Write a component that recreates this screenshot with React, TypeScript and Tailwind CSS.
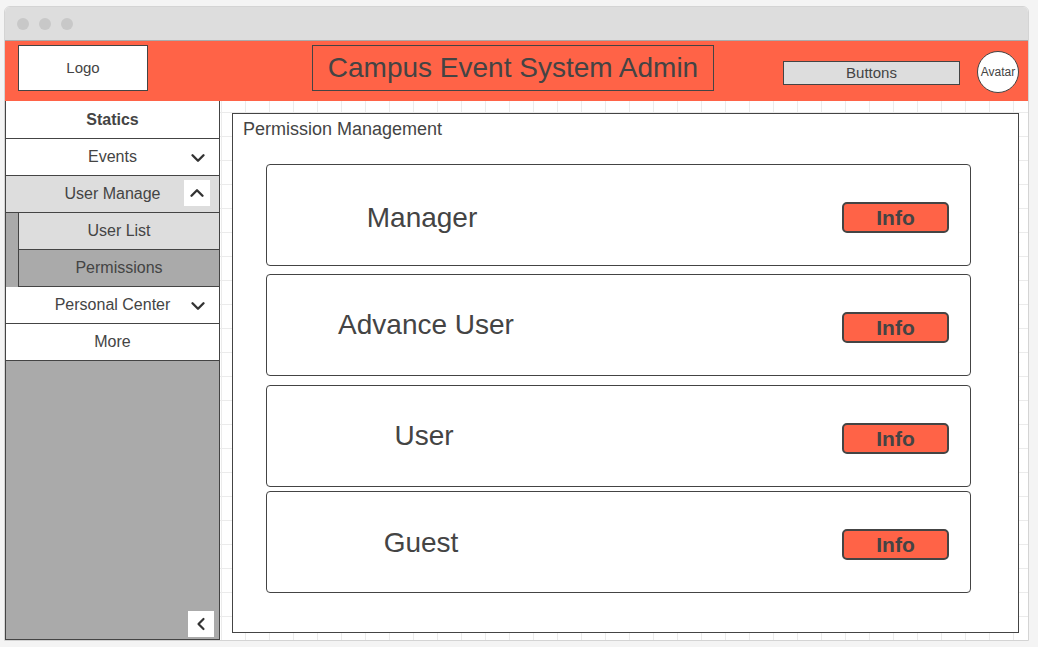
import { ChevronDown, ChevronLeft, ChevronUp } from 'lucide-react';

interface Role {
  name: string;
  top: number;
  shift: number;
  dy: number;
}

const roles: Role[] = [
  { name: 'Manager', top: 24, shift: -2, dy: 5 },
  { name: 'Advance User', top: 8, shift: 2, dy: 0 },
  { name: 'User', top: 9, shift: 0, dy: 0 },
  { name: 'Guest', top: 4, shift: -3, dy: 1 },
];

function NavRow({
  label,
  bold,
  icon,
  className = '',
}: {
  label: string;
  bold?: boolean;
  icon?: 'down' | 'up';
  className?: string;
}) {
  return (
    <div
      className={`relative flex h-[37px] items-center justify-center border-b border-[#444] text-[16px] text-[#444] ${
        bold ? 'font-bold' : ''
      } ${className}`}
    >
      <span>{label}</span>
      {icon === 'down' && (
        <ChevronDown size={22} strokeWidth={2.6} className="absolute right-[10px] top-[8px] text-[#333]" />
      )}
      {icon === 'up' && (
        <div className="absolute right-[9px] top-[4px] flex h-[26px] w-[26px] items-center justify-center bg-white">
          <ChevronUp size={22} strokeWidth={2.6} className="text-[#333]" />
        </div>
      )}
    </div>
  );
}

function Sidebar() {
  return (
    <div className="flex w-[215px] shrink-0 flex-col border-x border-b border-[#444] bg-[#aaaaaa]">
      <div className="bg-white">
        <NavRow label="Statics" bold className="h-[38px] pt-[1px]" />
        <NavRow label="Events" icon="down" />
      </div>
      <NavRow label="User Manage" icon="up" className="bg-[#dddddd]" />
      <div className="flex">
        <div className="w-[13px] shrink-0 border-r border-[#444] bg-[#aaaaaa]" />
        <div className="flex-1">
          <NavRow label="User List" className="bg-[#dddddd]" />
          <NavRow label="Permissions" className="bg-[#aaaaaa]" />
        </div>
      </div>
      <div className="bg-white">
        <NavRow label="Personal Center" icon="down" />
        <NavRow label="More" />
      </div>
      <div className="flex flex-1 items-end justify-end pb-[2px] pr-[5px]">
        <div className="flex h-[26px] w-[26px] items-center justify-center bg-white">
          <ChevronLeft size={20} strokeWidth={2.6} className="text-[#333]" />
        </div>
      </div>
    </div>
  );
}

function RoleCard({ role }: { role: Role }) {
  return (
    <div
      className="flex h-[102px] w-[705px] items-center rounded-[4px] border border-[#444] bg-white"
      style={{ marginTop: role.top }}
    >
      <div
        className="w-[314px] text-center text-[28px] text-[#444]"
        style={{ marginLeft: role.shift, paddingTop: role.dy }}
      >
        {role.name}
      </div>
      <div className="ml-auto mr-[21px] mt-[5px] flex h-[31px] w-[107px] items-center justify-center rounded-[5px] border-2 border-[#444] bg-[#ff6347] text-[21px] font-bold text-[#444]">
        Info
      </div>
    </div>
  );
}

export default function App() {
  return (
    <div
      className="h-[647px] w-[1038px] overflow-hidden bg-[#f4f4f4] pl-[4px] pt-[6px]"
      style={{ fontFamily: '"Liberation Sans", Arial, sans-serif' }}
    >
      <div className="w-[1025px] overflow-hidden rounded-t-[6px] border border-[#d4d4d4] bg-white">
        {/* Title bar */}
        <div className="flex h-[34px] items-center gap-[10px] border-b border-[#aaaaaa] bg-[#dddddd] pl-[12px]">
          <span className="h-[12px] w-[12px] rounded-full bg-[#c8c8c8]" />
          <span className="h-[12px] w-[12px] rounded-full bg-[#c8c8c8]" />
          <span className="h-[12px] w-[12px] rounded-full bg-[#c8c8c8]" />
        </div>

        {/* Header */}
        <div className="flex h-[60px] items-start bg-[#ff6347] text-[#444]">
          <div className="ml-[13px] mt-[4px] flex h-[46px] w-[130px] items-center justify-center border border-[#444] bg-white text-[15px]">
            Logo
          </div>
          <div className="ml-[164px] mt-[4px] flex h-[46px] w-[402px] items-center justify-center border border-[#444] text-[28px]">
            Campus Event System Admin
          </div>
          <div className="ml-[69px] mt-[20px] flex h-[24px] w-[177px] items-center justify-center border border-[#444] bg-[#dddddd] text-[15px]">
            Buttons
          </div>
          <div className="ml-[17px] mt-[10px] flex h-[42px] w-[42px] items-center justify-center rounded-full border border-[#444] bg-white text-[12px]">
            Avatar
          </div>
        </div>

        {/* Body */}
        <div className="flex h-[539px]">
          <Sidebar />
          <div className="flex-1 bg-white bg-[linear-gradient(to_right,#ebebeb_1px,transparent_1px),linear-gradient(to_bottom,#ebebeb_1px,transparent_1px)] bg-[size:24px_24px] bg-[position:1px_11px] pl-[12px] pt-[12px]">
            <div className="h-[520px] w-[787px] border border-[#444] bg-white">
              <div className="px-[10px] pt-[4px] text-[18px] leading-[22px] text-[#444]">
                Permission Management
              </div>
              <div className="ml-[33px] flex flex-col">
                {roles.map((role) => (
                  <RoleCard key={role.name} role={role} />
                ))}
              </div>
            </div>
          </div>
        </div>
      </div>
    </div>
  );
}
